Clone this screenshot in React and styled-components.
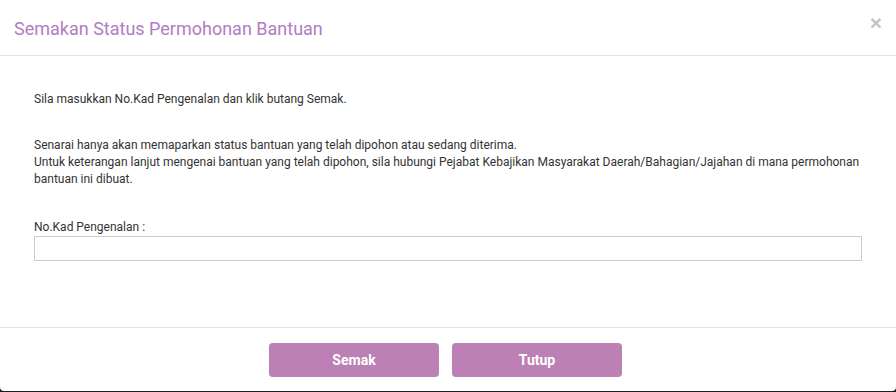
import React from "react";
import styled, { createGlobalStyle } from "styled-components";

const GlobalStyle = createGlobalStyle`
  html, body {
    margin: 0;
    padding: 0;
    background: #1e1e1e;
  }
  body {
    font-family: Roboto, "Liberation Sans", Arial, sans-serif;
  }
`;

const App = () => {
  return (
    <>
      <GlobalStyle />
      <Modal>
        <Header>
          <Title>Semakan Status Permohonan Bantuan</Title>
          <CloseButton type="button" aria-label="Tutup">×</CloseButton>
        </Header>
        <Body>
          <Text>Sila masukkan No.Kad Pengenalan dan klik butang Semak.</Text>
          <Text $gap={29}>
            Senarai hanya akan memaparkan status bantuan yang telah dipohon atau sedang diterima.
            <br />
            Untuk keterangan lanjut mengenai bantuan yang telah dipohon, sila hubungi Pejabat
            Kebajikan Masyarakat Daerah/Bahagian/Jajahan di mana permohonan bantuan ini dibuat.
          </Text>
          <Label htmlFor="nokp">No.Kad Pengenalan :</Label>
          <Input id="nokp" type="text" />
        </Body>
        <Footer>
          <Button type="button">Semak</Button>
          <Button type="button">Tutup</Button>
        </Footer>
      </Modal>
    </>
  );
};

const Modal = styled.div`
  display: flex;
  flex-direction: column;
  width: 896px;
  height: 391px;
  background: #fff;
  border-radius: 0 0 4px 4px;
`;

const Header = styled.div`
  display: flex;
  justify-content: space-between;
  align-items: center;
  height: 55px;
  padding: 0 14px;
  border-bottom: 1px solid #e5e5e5;
`;

const Title = styled.h4`
  margin: 2px 0 0;
  font-size: 18px;
  font-weight: 400;
  color: #b27cc4;
`;

const CloseButton = styled.button`
  align-self: flex-start;
  margin-top: 12px;
  padding: 0;
  border: 0;
  background: transparent;
  font-family: "Liberation Sans", Arial, sans-serif;
  font-size: 21px;
  font-weight: 700;
  line-height: 1;
  color: #c4c4c4;
  cursor: pointer;
`;

const Body = styled.div`
  flex: 1;
  display: flex;
  flex-direction: column;
  padding: 35px 34px 0;
`;

const Text = styled.p`
  margin: ${(p) => p.$gap || 0}px 0 0;
  font-size: 12px;
  line-height: 17px;
  color: #333;
`;

const Label = styled.label`
  margin-top: 31px;
  font-size: 12px;
  line-height: 17px;
  color: #333;
`;

const Input = styled.input`
  box-sizing: border-box;
  width: 100%;
  height: 25px;
  margin: 0;
  padding: 2px 6px;
  border: 1px solid #cccccc;
  border-radius: 0;
  font-family: inherit;
  font-size: 12px;
  outline: none;
`;

const Footer = styled.div`
  display: flex;
  justify-content: center;
  gap: 13px;
  height: 64px;
  padding: 15px 5px 0 0;
  box-sizing: border-box;
  border-top: 1px solid #e5e5e5;
`;

const Button = styled.button`
  width: 170px;
  height: 34px;
  border: 0;
  border-radius: 4px;
  background: #bd80b4;
  color: #fff;
  font-family: Roboto, "Liberation Sans", Arial, sans-serif;
  font-size: 14px;
  font-weight: 700;
  cursor: pointer;
`;

export default App;
